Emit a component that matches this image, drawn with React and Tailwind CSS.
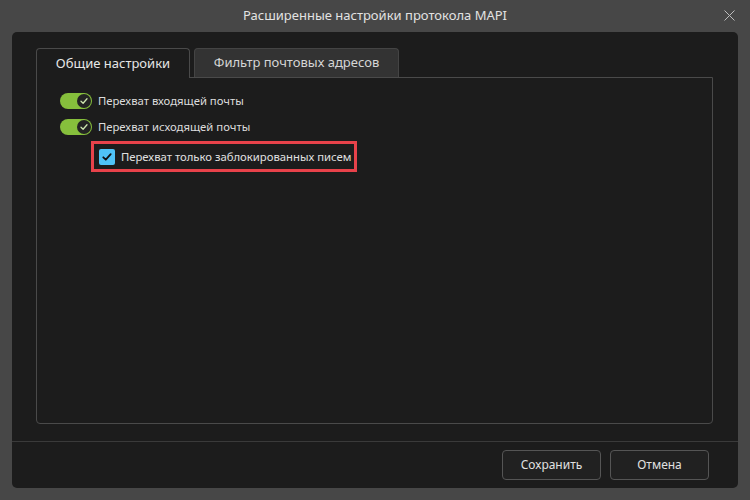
const font = { fontFamily: '"Noto Sans", "Open Sans", sans-serif' };

const Toggle = () => (
  <div className="w-[32px] h-[16px] rounded-full bg-[#86bf3c] flex items-center justify-end pr-[1px]">
    <div className="w-[14px] h-[14px] rounded-full bg-[#232323] flex items-center justify-center">
      <svg width="10" height="10" viewBox="0 0 10 10">
        <path d="M2 5.2 L4.1 7.2 L8 2.8" fill="none" stroke="#cfe6b0" strokeWidth="1.3" strokeLinecap="round" strokeLinejoin="round" />
      </svg>
    </div>
  </div>
);

const ToggleRow = ({ label }) => (
  <div className="flex items-center gap-[6px] h-[16px]">
    <Toggle />
    <span className="text-[11.3px] text-[#dcdcdc] leading-none whitespace-nowrap">{label}</span>
  </div>
);

export default function App() {
  return (
    <div className="w-[750px] h-[500px] bg-[#474747] flex flex-col overflow-hidden" style={font}>
      <div className="h-[32px] relative flex items-center justify-center">
        <span className="text-[13px] text-[#e2e2e2]">Расширенные настройки протокола MAPI</span>
        <svg className="absolute right-[15px] top-[10px]" width="11" height="11" viewBox="0 0 11 11">
          <path d="M0.5 0.5 L10.5 10.5 M10.5 0.5 L0.5 10.5" stroke="#bdbdbd" strokeWidth="1" />
        </svg>
      </div>

      <div className="mx-[12px] mb-[12px] flex-1 bg-[#1c1c1c] rounded-[5px] flex flex-col">
        <div className="flex-1 flex flex-col pl-[24px] pr-[25px] pt-[16px] pb-[17px]">
          <div className="flex items-end gap-[4px] h-[29px]">
            <div className="relative z-10 -mb-px h-[30px] w-[154px] border border-b-0 border-[#4a4a4a] bg-[#1c1c1c] rounded-t-[4px] flex items-center justify-center">
              <span className="text-[13px] text-[#e6e6e6]">Общие настройки</span>
            </div>
            <div className="h-[29px] w-[205px] border border-b-0 border-[#444] bg-[#333333] rounded-t-[4px] flex items-center justify-center">
              <span className="text-[13px] text-[#d6d6d6]">Фильтр почтовых адресов</span>
            </div>
          </div>
          <div className="flex-1 border border-[#4a4a4a] rounded-b-[4px] pl-[23px] pt-[15px] flex flex-col">
            <div className="flex flex-col gap-[10px]">
              <ToggleRow label="Перехват входящей почты" />
              <ToggleRow label="Перехват исходящей почты" />
            </div>
            <div className="ml-[31px] mt-[6px] w-[266px] h-[31px] border-[3px] border-[#e8424a] flex items-center pl-[5px] gap-[6px]">
              <div className="w-[16px] h-[16px] rounded-[2px] bg-[#4fc3f7] flex items-center justify-center shrink-0">
                <svg width="12" height="12" viewBox="0 0 12 12">
                  <path d="M2.3 6.3 L4.8 8.7 L9.7 3.2" fill="none" stroke="#111" strokeWidth="1.8" strokeLinecap="round" strokeLinejoin="round" />
                </svg>
              </div>
              <span className="text-[11.3px] text-[#e0e0e0] leading-none whitespace-nowrap">Перехват только заблокированных писем</span>
            </div>
          </div>
        </div>
        <div className="h-[47px] border-t border-[#3a3a3a] flex items-center justify-end gap-[9px] pr-[29px]">
          <button className="w-[99px] h-[30px] border border-[#555] rounded-[4px] bg-[#212121] text-[12px] text-[#e0e0e0]">Сохранить</button>
          <button className="w-[99px] h-[30px] border border-[#555] rounded-[4px] bg-[#212121] text-[12px] text-[#e0e0e0]">Отмена</button>
        </div>
      </div>
    </div>
  );
}
